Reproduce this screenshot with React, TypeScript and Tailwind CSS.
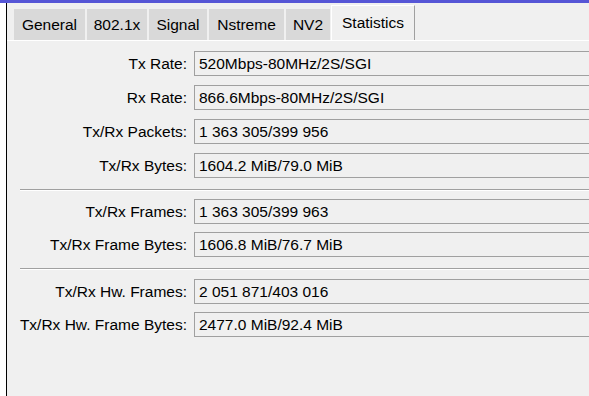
const tabs = [
  { label: "General", w: "w-[71px]" },
  { label: "802.1x", w: "w-[60px]" },
  { label: "Signal", w: "w-[58px]" },
  { label: "Nstreme", w: "w-[75px]" },
  { label: "NV2", w: "w-[44px]" },
];

type Row = { label: string; value: string; mt: string };

const groups: { rows: Row[]; mt: string }[] = [
  {
    mt: "mt-[10px]",
    rows: [
      { label: "Tx Rate:", value: "520Mbps-80MHz/2S/SGI", mt: "mt-0" },
      { label: "Rx Rate:", value: "866.6Mbps-80MHz/2S/SGI", mt: "mt-[9px]" },
      { label: "Tx/Rx Packets:", value: "1 363 305/399 956", mt: "mt-[9px]" },
      { label: "Tx/Rx Bytes:", value: "1604.2 MiB/79.0 MiB", mt: "mt-[9px]" },
    ],
  },
  {
    mt: "mt-[8px]",
    rows: [
      { label: "Tx/Rx Frames:", value: "1 363 305/399 963", mt: "mt-0" },
      { label: "Tx/Rx Frame Bytes:", value: "1606.8 MiB/76.7 MiB", mt: "mt-[8px]" },
    ],
  },
  {
    mt: "mt-[9px]",
    rows: [
      { label: "Tx/Rx Hw. Frames:", value: "2 051 871/403 016", mt: "mt-0" },
      { label: "Tx/Rx Hw. Frame Bytes:", value: "2477.0 MiB/92.4 MiB", mt: "mt-[8px]" },
    ],
  },
];

// value box runs off the right edge of the window, so no right border
function Field({ label, value, mt }: Row) {
  return (
    <div className={`flex items-center ${mt}`}>
      <div className="w-[181px] shrink-0 pr-[1px] text-right text-black">{label}</div>
      <div className="ml-[6px] flex h-[25px] flex-1 items-center border-y border-l border-[#a0a0a0] pl-[4px] text-black">
        {value}
      </div>
    </div>
  );
}

function Separator() {
  return (
    <div className="mt-[11px] ml-[13px]">
      <div className="h-px bg-[#a0a0a0]" />
      <div className="h-px bg-white" />
    </div>
  );
}

export default function App() {
  return (
    <div
      className="flex h-[396px] w-full flex-col overflow-hidden bg-[#f0f0f0] text-[15.5px] leading-none"
      style={{ fontFamily: '"Liberation Sans", Arial, sans-serif' }}
    >
      <div className="h-[3px] shrink-0 bg-[#5656d6]" />
      <div className="flex flex-1 overflow-hidden">
        <div className="w-[6px] shrink-0 bg-white" />
        <div className="w-px shrink-0 bg-black" />
        <div className="flex min-w-0 flex-1 flex-col overflow-hidden">
          <div className="flex h-[37px] shrink-0 items-end gap-[2px] pl-[7px]">
            {tabs.map((t) => (
              <div
                key={t.label}
                className={`flex h-[31px] ${t.w} items-center justify-center bg-[#d9d9d9] text-black`}
              >
                {t.label}
              </div>
            ))}
            <div className="-ml-px flex h-[35px] w-[84px] items-center justify-center border-t border-l border-r border-t-white border-l-white border-r-[#a0a0a0] bg-[#f0f0f0] pb-[1px] text-black">
              Statistics
            </div>
          </div>
          <div className="h-px shrink-0 bg-white" />
          <div className="flex flex-col">
            {groups.map((g, gi) => (
              <div key={gi}>
                {gi > 0 && <Separator />}
                <div className={g.mt}>
                  {g.rows.map((r) => (
                    <Field key={r.label} {...r} />
                  ))}
                </div>
              </div>
            ))}
          </div>
        </div>
      </div>
    </div>
  );
}
